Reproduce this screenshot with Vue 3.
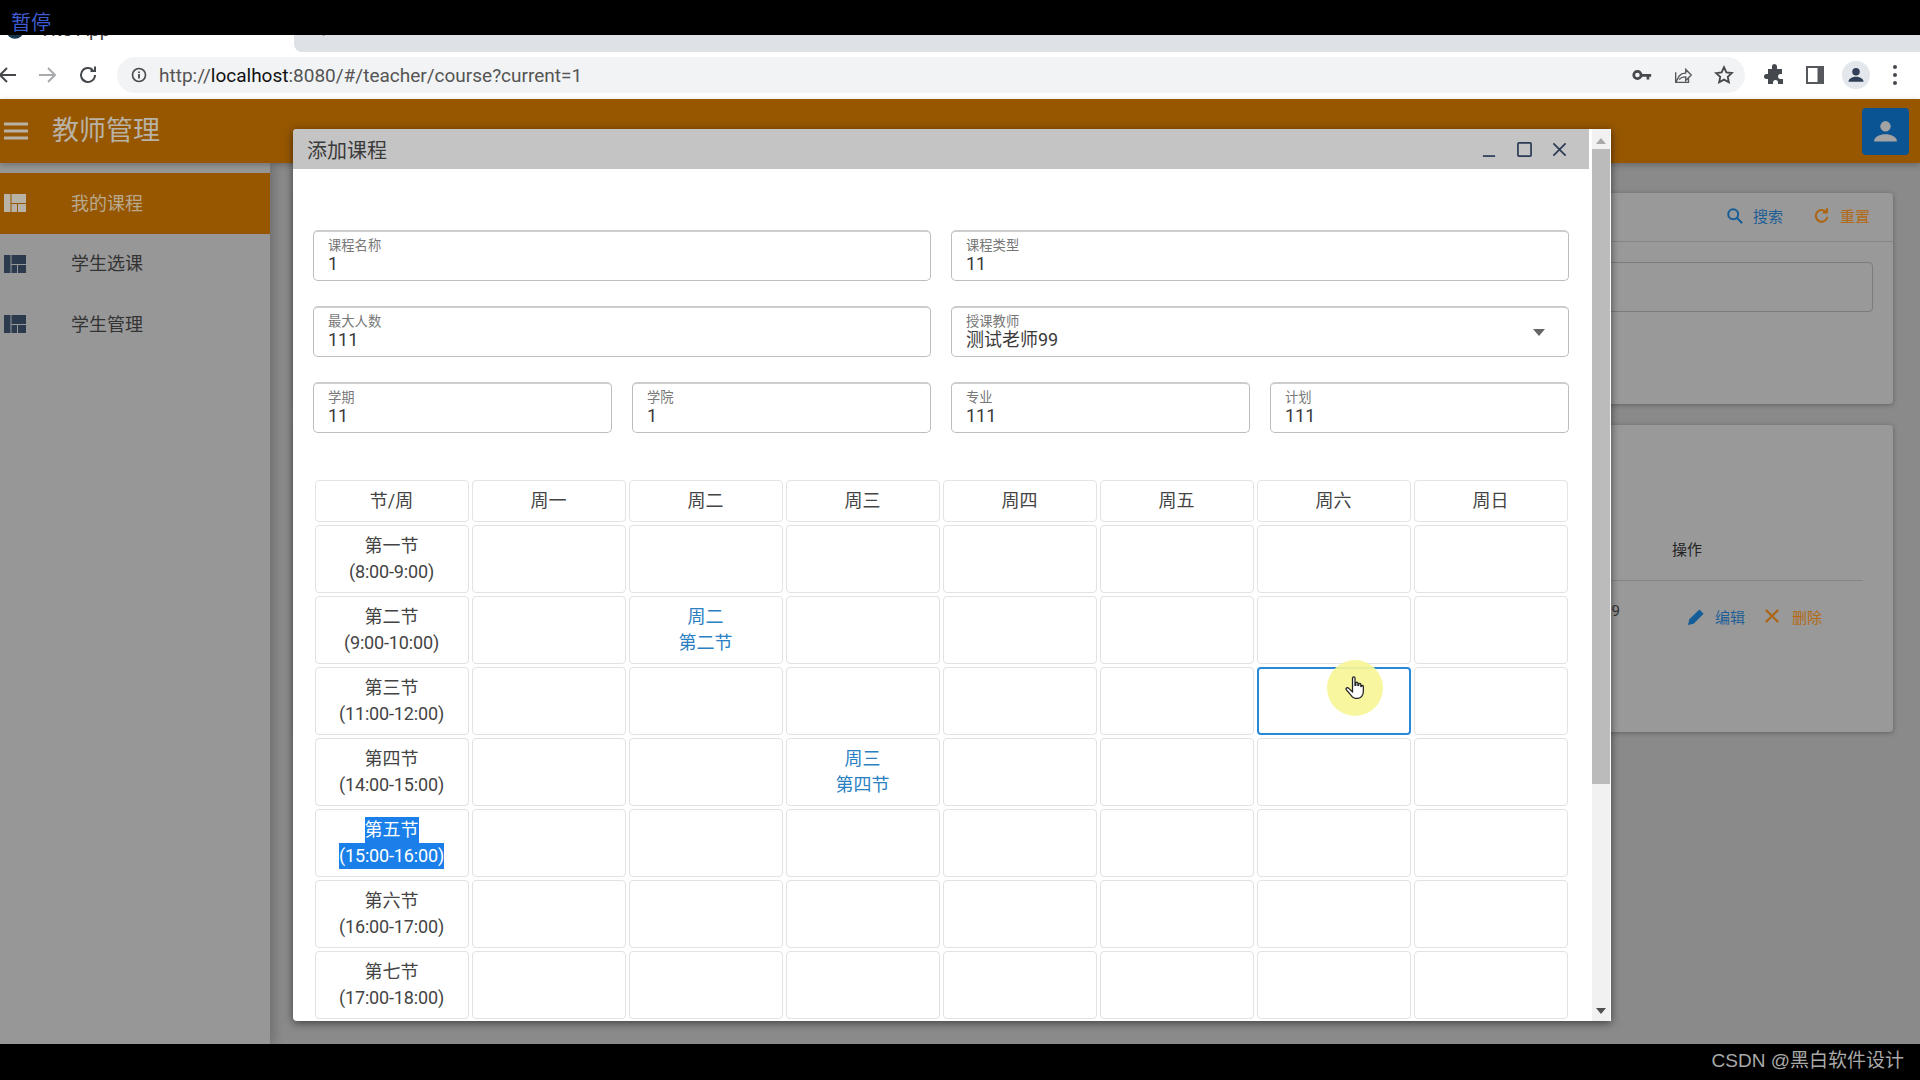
<script setup>
const days = ['节/周', '周一', '周二', '周三', '周四', '周五', '周六', '周日']
const periods = [
  ['第一节', '(8:00-9:00)'],
  ['第二节', '(9:00-10:00)'],
  ['第三节', '(11:00-12:00)'],
  ['第四节', '(14:00-15:00)'],
  ['第五节', '(15:00-16:00)'],
  ['第六节', '(16:00-17:00)'],
  ['第七节', '(17:00-18:00)'],
  ['第八节', '(19:00-20:00)']
]
const picked = { '1-2': ['周二', '第二节'], '3-3': ['周三', '第四节'] }
const dayIndexes = [1, 2, 3, 4, 5, 6, 7]
const navItems = ['我的课程', '学生选课', '学生管理']
</script>

<template>
  <div class="screen">
    <div class="black-top"><span class="pause">暂停</span></div>

    <div class="chrome">
      <div class="tabstrip">
        <div class="tab">
          <svg class="favicon" viewBox="0 0 16 16"><circle cx="8" cy="8" r="7" fill="#16384f" /></svg>
          <span class="tab-title">Vite App</span>
        </div>
        <div class="tab-rest"><span class="plus">+</span></div>
      </div>
      <div class="toolbar">
        <svg class="tool-icon back" viewBox="0 0 24 24"><path d="M20 12H5M11 5l-7 7 7 7" fill="none" stroke="#45494d" stroke-width="2" /></svg>
        <svg class="tool-icon fwd" viewBox="0 0 24 24"><path d="M4 12h15M13 5l7 7-7 7" fill="none" stroke="#a8abae" stroke-width="2" /></svg>
        <svg class="tool-icon reload" viewBox="0 0 24 24"><path d="M19 12a7 7 0 1 1-2.2-5.1M19 3.5V8h-4.5" fill="none" stroke="#45494d" stroke-width="2" /></svg>
        <div class="omnibox">
          <svg class="info" viewBox="0 0 16 16"><circle cx="8" cy="8" r="6.5" fill="none" stroke="#45494d" stroke-width="1.6" /><path d="M8 7v4.5M8 4.4v1.5" stroke="#45494d" stroke-width="1.8" /></svg>
          <span class="url"><i>http://</i>localhost<i>:8080/#/teacher/course?current=1</i></span>
          <span class="omni-space"></span>
          <svg class="omni-icon" viewBox="0 0 24 24"><circle cx="7" cy="12" r="4" fill="none" stroke="#45494d" stroke-width="3" /><path d="M11 11h11v3h-2v3h-3v-3h-6z" fill="#45494d" /></svg>
          <svg class="omni-icon" viewBox="0 0 24 24"><path d="M4 9v11h14v-4M4 20l4-7c2-2.500 5-3 7-3V6l6 6-6 6v-4c-3 0-5 0-7 3" fill="none" stroke="#55595d" stroke-width="1.500" /></svg>
          <svg class="omni-icon" viewBox="0 0 24 24"><path d="M12 3.500l2.600 5.600 6 .7-4.500 4.100 1.200 6L12 17l-5.300 3 1.200-6-4.500-4.100 6-.7z" fill="none" stroke="#45494d" stroke-width="2" /></svg>
        </div>
        <svg class="tb-icon puzzle" viewBox="0 0 24 24"><path d="M9 3.500a2.500 2.500 0 0 1 5 0V6h5v5h-1.500a2.500 2.500 0 0 0 0 5H20v5h-5v-1.500a2.500 2.500 0 0 0-5 0V21H5v-5H3.500a2.500 2.500 0 0 1 0-5H5V6h4z" fill="#45494d" /></svg>
        <svg class="tb-icon panel" viewBox="0 0 24 24"><rect x="3" y="3" width="18" height="18" fill="#55595d" /><rect x="5" y="5" width="9.500" height="14" fill="#fff" /></svg>
        <div class="profile">
          <svg viewBox="0 0 24 24"><circle cx="12" cy="8" r="4.500" fill="#2f4058" /><path d="M3 20c0-4 5-6 9-6s9 2 9 6z" fill="#2f4058" /></svg>
        </div>
        <div class="dots"><b></b><b></b><b></b></div>
      </div>
    </div>

    <div class="app">
      <header class="app-header">
        <svg class="burger" viewBox="0 0 24 18"><path d="M0 2h24M0 9h24M0 16h24" stroke="#b9b2a6" stroke-width="3" /></svg>
        <span class="app-title">教师管理</span>
        <span class="spacer"></span>
        <button class="user-btn">
          <svg viewBox="0 0 24 24"><circle cx="12" cy="7.500" r="5" fill="#a3a3a3" /><path d="M1 22c0-5 6-7 11-7s11 2 11 7z" fill="#a3a3a3" /></svg>
        </button>
      </header>

      <div class="app-body">
        <aside class="sidebar">
          <div v-for="(n, i) in navItems" :key="n" class="nav-item" :class="{ active: i === 0 }">
            <svg class="nav-icon" viewBox="0 0 22 18"><path d="M0 0h6.500v18H0zM7.500 0H22v9H7.500zM7.500 10H13v8H7.500zM14 10h8v8h-8z" /></svg>
            <span>{{ n }}</span>
          </div>
        </aside>

        <main class="main">
          <section class="card search-card">
            <div class="card-head">
              <span class="act blue">
                <svg viewBox="0 0 20 20"><circle cx="8" cy="8" r="5.500" fill="none" stroke="#155d98" stroke-width="2.200" /><path d="M12 12l6 6" stroke="#155d98" stroke-width="2.200" /></svg>
                搜索
              </span>
              <span class="act orange">
                <svg viewBox="0 0 20 20"><path d="M16 11a6.500 6.500 0 1 1-2-6M15.500 1.500V6H11" fill="none" stroke="#ad6411" stroke-width="2.200" /></svg>
                重置
              </span>
            </div>
            <div class="card-body"><div class="ghost-input"></div></div>
          </section>
          <section class="card table-card">
            <div class="t-head"><span>操作</span></div>
            <div class="t-row">
              <span class="t-nine">9</span>
              <span class="act blue t-edit">
                <svg class="pencil" viewBox="0 0 20 20"><path d="M1 19l1.500-6L13 2.500l4.500 4.500L7 17.500z" fill="#155d98" /></svg>
                编辑
              </span>
              <span class="act orange t-del">
                <svg viewBox="0 0 20 20"><path d="M3 3l14 14M17 3L3 17" stroke="#ad6411" stroke-width="2.200" /></svg>
                删除
              </span>
            </div>
          </section>
        </main>
      </div>

      <div class="dialog">
        <div class="dialog-main">
          <div class="dialog-title">
            <span>添加课程</span>
            <span class="spacer"></span>
            <svg class="win-btn" viewBox="0 0 16 16"><path d="M1 15h13" stroke="#2b3a55" stroke-width="1.800" /></svg>
            <svg class="win-btn" viewBox="0 0 16 16"><rect x="1" y="1" width="14" height="14" rx="1" fill="none" stroke="#2b3a55" stroke-width="1.800" /></svg>
            <svg class="win-btn" viewBox="0 0 16 16"><path d="M1.500 1.500l13 13M14.500 1.500l-13 13" stroke="#2b3a55" stroke-width="1.800" /></svg>
          </div>
          <div class="dialog-body">
            <div class="form-row two">
              <div class="field"><label>课程名称</label><div class="val">1</div></div>
              <div class="field"><label>课程类型</label><div class="val">11</div></div>
            </div>
            <div class="form-row two">
              <div class="field"><label>最大人数</label><div class="val">111</div></div>
              <div class="field select">
                <label>授课教师</label><div class="val">测试老师99</div>
                <span class="caret"></span>
              </div>
            </div>
            <div class="form-row four">
              <div class="field"><label>学期</label><div class="val">11</div></div>
              <div class="field"><label>学院</label><div class="val">1</div></div>
              <div class="field"><label>专业</label><div class="val">111</div></div>
              <div class="field"><label>计划</label><div class="val">111</div></div>
            </div>

            <div class="schedule">
              <div v-for="d in days" :key="d" class="cell head">{{ d }}</div>
              <template v-for="(p, r) in periods" :key="r">
                <div class="cell">
                  <template v-if="r === 4">
                    <span class="sel">{{ p[0] }}</span>
                    <span class="sel time">{{ p[1] }}</span>
                  </template>
                  <template v-else>
                    <span class="ln">{{ p[0] }}</span>
                    <span class="ln time">{{ p[1] }}</span>
                  </template>
                </div>
                <div
                  v-for="c in dayIndexes"
                  :key="c"
                  class="cell"
                  :class="{ picked: picked[r + '-' + c], focus: r === 2 && c === 6 }"
                >
                  <template v-if="picked[r + '-' + c]">
                    <span class="ln">{{ picked[r + '-' + c][0] }}</span>
                    <span class="ln">{{ picked[r + '-' + c][1] }}</span>
                  </template>
                </div>
              </template>
            </div>
          </div>
        </div>
        <div class="scrollbar">
          <span class="arrow up"></span>
          <div class="thumb"></div>
          <span class="arrow down"></span>
        </div>

        <div class="cursor-halo">
          <svg viewBox="0 0 24 30">
            <path d="M9 3c0-2 3-2 3 0v9l1-.3V9c0-1.500 2.500-1.500 2.500 0v3l1-.2V10.500c0-1.500 2.500-1.500 2.500 0V13l.8-.2c0-1.300 2.200-1.300 2.200.5v6c0 4-2.500 8-6.500 8h-3c-3 0-4.500-2-6-4.500L1.500 17c-1-1.800 1.500-3.500 3-1.500L9 19.500z" fill="#fff" stroke="#222" stroke-width="1.500" />
          </svg>
        </div>
      </div>
    </div>

    <div class="black-bottom"><span class="mark">CSDN @黑白软件设计</span></div>
  </div>
</template>

<style>
html, body { margin: 0; padding: 0; background: #000; }
</style>

<style scoped>
.screen {
  width: 1920px;
  height: 1080px;
  display: flex;
  flex-direction: column;
  overflow: hidden;
  font-family: Roboto, "Noto Sans CJK SC", sans-serif;
  color: #444;
  background: #000;
}
.spacer { flex: 1; }

.black-top { height: 35px; flex: none; background: #000; display: flex; align-items: center; padding-left: 11px; }
.pause { color: #3d5bd0; font-size: 20px; line-height: 24px; margin-top: 11px; position: relative; z-index: 2; }
.black-bottom { height: 36px; flex: none; background: #000; display: flex; justify-content: flex-end; align-items: center; padding-right: 16px; }
.mark { color: #a9a9a9; font-size: 19px; margin-top: -7px; font-family: "Liberation Sans", "Noto Sans CJK SC", sans-serif; }

.chrome { height: 64px; flex: none; background: #fff; display: flex; flex-direction: column; }
.tabstrip { height: 17px; display: flex; flex: none; overflow: hidden; }
.tab { width: 294px; flex: none; display: flex; align-items: flex-start; padding-left: 5px; box-sizing: border-box; background: #fff; }
.favicon { width: 20px; height: 20px; margin-top: -15px; flex: none; }
.tab-title { font-size: 19px; line-height: 24px; margin: -17px 0 0 14px; color: #444; white-space: nowrap; }
.tab-rest { flex: 1; background: #dee1e6; border-radius: 0 0 0 8px; padding-left: 24px; position: relative; overflow: hidden; }
.plus { display: block; font-size: 20px; line-height: 20px; margin-top: -15px; color: #555; }

.toolbar { height: 47px; display: flex; align-items: center; position: relative; }
.tool-icon { width: 24px; height: 24px; flex: none; margin-top: -2px; }
.back { margin-left: -4px; }
.fwd { margin-left: 15px; }
.reload { margin-left: 17px; margin-right: 17px; }
.omnibox {
  width: 1628px; height: 36px; margin-top: -1px; flex: none;
  background: #f1f3f4; border-radius: 18px;
  display: flex; align-items: center; box-sizing: border-box; padding: 0 10px 0 14px;
}
.info { width: 16px; height: 16px; flex: none; }
.url { font-size: 19px; color: #111; margin-left: 12px; white-space: nowrap; }
.url i { font-style: normal; color: #555; }
.omni-space { flex: 1; }
.omni-icon { width: 22px; height: 22px; margin-left: 19px; flex: none; }
.tb-icon { width: 24px; height: 24px; flex: none; margin-top: -2px; }
.puzzle { margin-left: 18px; }
.panel { margin-left: 16px; }
.profile { width: 28px; height: 28px; border-radius: 50%; background: #e3e6ea; margin-left: 15px; margin-top: -2px; flex: none; display: flex; align-items: center; justify-content: center; }
.profile svg { width: 20px; height: 20px; }
.dots { display: flex; flex-direction: column; gap: 4px; margin-left: 23px; margin-top: -2px; }
.dots b { width: 4px; height: 4px; border-radius: 50%; background: #45494d; display: block; }

.app { flex: 1; position: relative; display: flex; flex-direction: column; min-height: 0; background: #8a8a8a; }
.app-header {
  height: 64px; flex: none; background: #975700;
  display: flex; align-items: center; padding: 0 11px 0 4px; position: relative; z-index: 1;
  box-shadow: 0 2px 6px rgba(0,0,0,.25);
}
.burger { width: 24px; height: 18px; flex: none; }
.app-title { font-size: 27px; color: #b9b2a6; margin-left: 24px; margin-top: -5px; }
.user-btn { width: 47px; height: 47px; background: #0a5494; border: 0; border-radius: 4px; padding: 0 11px; display: flex; align-items: center; justify-content: center; }
.user-btn svg { width: 26px; height: 26px; }

.app-body { flex: 1; display: flex; min-height: 0; }
.sidebar { width: 270px; flex: none; background: #979797; padding-top: 10px; box-shadow: 4px 0 10px rgba(0,0,0,.2); position: relative; }
.nav-item { height: 60.500px; display: flex; align-items: center; padding-left: 4px; font-size: 18px; color: #333; }
.nav-item span { margin-left: 45px; margin-top: -3px; }
.nav-icon { width: 22px; height: 18px; flex: none; fill: #2b3a4d; }
.nav-item.active { background: #975700; color: #b9a98f; }
.nav-item.active .nav-icon { fill: #b9b2a6; }

.main { flex: 1; padding: 30px 27px 0 25px; min-width: 0; }
.card { background: #999; border-radius: 4px; box-shadow: 0 1px 5px rgba(0,0,0,.3); }
.search-card { height: 211px; }
.card-head { height: 49px; border-bottom: 1px solid #858585; display: flex; justify-content: flex-end; align-items: center; padding: 0 23px 3px 0; gap: 30px; box-sizing: border-box; }
.act { display: inline-flex; align-items: center; font-size: 15px; gap: 9px; }
.act svg { width: 18px; height: 18px; }
.act svg.pencil { width: 19px; height: 19px; }
.blue { color: #1e5f96; }
.orange { color: #b46a14; }
.card-body { padding: 20px 20px 0; }
.ghost-input { height: 50px; border: 1px solid #7c7c7c; border-radius: 4px; box-sizing: border-box; }
.table-card { height: 307px; margin-top: 21px; position: relative; }
.t-head { height: 156px; margin-right: 30px; border-bottom: 1px solid #848484; box-sizing: border-box; display: flex; justify-content: flex-end; align-items: flex-end; padding: 0 161px 21px 0; font-size: 15px; color: #222; }
.t-row { display: flex; justify-content: flex-end; align-items: center; height: 70px; padding-right: 71px; }
.t-nine { font-size: 15px; color: #333; margin-right: 67px; margin-top: -10px; }
.t-edit { margin-right: 18px; }
.t-del { gap: 11px; }

.dialog {
  position: absolute; left: 293px; top: 30px; width: 1318px; height: 892px; z-index: 3;
  background: #fff; display: flex; border-radius: 4px 0 0 4px;
  box-shadow: 0 2px 8px rgba(0,0,0,.55);
}
.dialog-main { width: 1296px; flex: none; display: flex; flex-direction: column; min-height: 0; }
.dialog-title {
  height: 40px; flex: none; background: #c4c4c4; display: flex; align-items: center;
  padding: 0 22px 0 14px; font-size: 20px; color: #3a3a3a; border-radius: 4px 0 0 0;
}
.win-btn { width: 15px; height: 15px; margin-left: 20px; flex: none; }
.dialog-body { flex: 1; min-height: 0; overflow: hidden; padding: 61px 20px 0 20px; }
.form-row { display: grid; column-gap: 20px; margin-bottom: 25px; }
.form-row.two { grid-template-columns: 1fr 1fr; }
.form-row.four { grid-template-columns: repeat(4, 1fr); margin-bottom: 47px; }
.field {
  height: 51px; box-sizing: border-box; border: 1px solid #bdbdbd; border-top: 2px solid #cdcdcd; border-radius: 5px;
  padding: 6px 14px 0 14px; position: relative;
}
.field label { display: block; font-size: 13.300px; line-height: 16px; color: #777; }
.val { font-size: 18px; line-height: 20px; color: #3a3a3a; }
.caret { position: absolute; right: 23px; top: 21px; border: 6px solid transparent; border-top: 7px solid #666; border-bottom: 0; }

.schedule {
  display: grid; grid-template-columns: repeat(8, 154px); gap: 2.500px 3px; margin-left: 1.500px;
  grid-auto-rows: 68.500px; grid-template-rows: 42px;
}
.cell {
  box-sizing: border-box; border: 1.500px solid #e2e2e2; border-radius: 4px;
  display: flex; flex-direction: column; align-items: center; justify-content: center;
  font-size: 18px; line-height: 26px; color: #444; text-align: center;
}
.cell.head { border-color: #e4e4e4; }
.picked { color: #2b7fc3; }
.focus { border: 2px solid #2a88d8; }
.ln { display: block; }
.time { letter-spacing: -0.150px; }
.sel { display: block; background: #1a7fe8; color: #fff; }

.scrollbar { width: 18px; margin: 0 1px 0 3px; flex: none; background: #f1f1f1; display: flex; flex-direction: column; align-items: center; position: relative; }
.arrow { width: 0; height: 0; border: 5px solid transparent; flex: none; }
.arrow.up { border-bottom: 6px solid #a8a8a8; border-top: 0; margin-top: 9px; }
.arrow.down { border-top: 6px solid #505050; border-bottom: 0; margin-top: auto; margin-bottom: 7px; }
.thumb { width: 100%; height: 635px; margin-top: 5px; background: #bbb; flex: none; }

.cursor-halo {
  position: absolute; left: 1034px; top: 531px; width: 56px; height: 56px; border-radius: 50%;
  background: rgba(247, 245, 150, .92); display: flex; align-items: center; justify-content: center;
}
.cursor-halo svg { width: 20px; height: 26px; }
</style>
